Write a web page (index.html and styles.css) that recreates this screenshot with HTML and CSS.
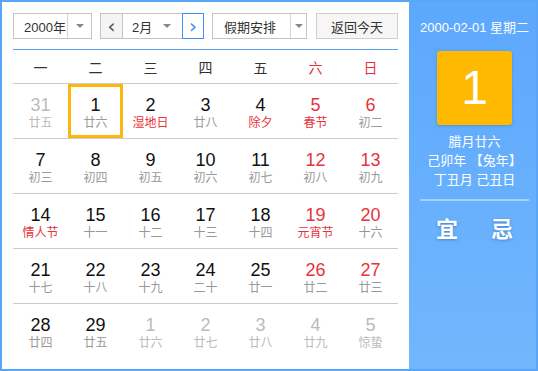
FILE: index.html
```html
<!DOCTYPE html>
<html lang="zh-CN">
<head>
    <meta charset="UTF-8">
    <title>万年历</title>
    <link rel="stylesheet" href="styles.css">
</head>
<body>

<div class="calendar">
    <div class="main">
        <div class="toolbar">
            <div class="select year-select">
                <span class="select-text">2000年</span>
                <span class="select-arrow"></span>
            </div>
            <div class="month-group">
                <button class="nav-btn">&lsaquo;</button>
                <div class="select month-select">
                    <span class="select-text">2月</span>
                    <span class="select-arrow plain"></span>
                </div>
                <button class="nav-btn active">&rsaquo;</button>
            </div>
            <div class="select holiday-select">
                <span class="select-text">假期安排</span>
                <span class="select-arrow"></span>
            </div>
            <button class="today-btn">返回今天</button>
        </div>

        <div class="weekdays">
            <div>一</div><div>二</div><div>三</div><div>四</div><div>五</div>
            <div class="weekend">六</div><div class="weekend">日</div>
        </div>

        <div class="days" id="days"></div>
    </div>

    <div class="panel">
        <div class="panel-date">2000-02-01 星期二</div>
        <div class="panel-day">1</div>
        <div class="panel-lunar">
            <div>腊月廿六</div>
            <div>己卯年 【兔年】</div>
            <div>丁丑月 己丑日</div>
        </div>
        <div class="panel-line"></div>
        <div class="panel-yiji">
            <span>宜</span>
            <span>忌</span>
        </div>
    </div>
</div>

<script>
    // [day, lunar, flags] flags: o = other month, r = red number, f = festival text, s = selected
    const days = [
        [31, '廿五', 'o'], [1, '廿六', 's'], [2, '湿地日', 'f'], [3, '廿八', ''], [4, '除夕', 'f'], [5, '春节', 'rf'], [6, '初二', 'r'],
        [7, '初三', ''], [8, '初四', ''], [9, '初五', ''], [10, '初六', ''], [11, '初七', ''], [12, '初八', 'r'], [13, '初九', 'r'],
        [14, '情人节', 'f'], [15, '十一', ''], [16, '十二', ''], [17, '十三', ''], [18, '十四', ''], [19, '元宵节', 'rf'], [20, '十六', 'r'],
        [21, '十七', ''], [22, '十八', ''], [23, '十九', ''], [24, '二十', ''], [25, '廿一', ''], [26, '廿二', 'r'], [27, '廿三', 'r'],
        [28, '廿四', ''], [29, '廿五', ''], [1, '廿六', 'o'], [2, '廿七', 'o'], [3, '廿八', 'o'], [4, '廿九', 'o'], [5, '惊蛰', 'o']
    ];

    const daysDiv = document.getElementById('days');
    days.forEach(([num, lunar, flags]) => {
        const cell = document.createElement('div');
        cell.className = 'day';
        if (flags.includes('o')) cell.classList.add('other');
        if (flags.includes('r')) cell.classList.add('red');
        if (flags.includes('f')) cell.classList.add('festival');
        if (flags.includes('s')) cell.classList.add('selected');
        cell.innerHTML = '<span class="num">' + num + '</span><span class="lunar">' + lunar + '</span>';
        daysDiv.appendChild(cell);
    });
</script>

</body>
</html>
```

FILE: styles.css
```css
body {
    margin: 0;
    font-family: 'Liberation Sans', 'Noto Sans CJK SC', sans-serif;
    background: #fff;
}
.calendar {
    box-sizing: border-box;
    width: 538px;
    height: 371px;
    border: 2px solid #5aa5f5;
    display: flex;
}
.main {
    width: 385px;
    padding: 11px 11px 0 11px;
    background: #fff;
}
.toolbar {
    display: flex;
    height: 26px;
    margin-bottom: 10px;
}
.select {
    box-sizing: border-box;
    height: 26px;
    border: 1px solid #c4c4c4;
    background: #fff;
    display: flex;
    align-items: stretch;
    font-size: 13px;
    color: #333;
}
.select-text {
    flex: 1;
    display: flex;
    align-items: center;
    padding-left: 10px;
}
.select-arrow {
    width: 23px;
    border-left: 1px solid #d6d6d6;
    position: relative;
}
.select-arrow.plain {
    border-left: none;
}
.select-arrow::after {
    content: '';
    position: absolute;
    left: 8px;
    top: 10px;
    border-left: 4px solid transparent;
    border-right: 4px solid transparent;
    border-top: 4px solid #888;
}
.year-select {
    width: 79px;
}
.month-group {
    display: flex;
    margin-left: 8px;
}
.month-select {
    width: 59px;
    border-left: none;
    border-right: none;
}
.month-select .select-text {
    padding-left: 9px;
}
.month-select .select-arrow::after {
    left: 4px;
}
.nav-btn {
    box-sizing: border-box;
    width: 23px;
    height: 26px;
    padding: 0;
    border: 1px solid #c4c4c4;
    background: #f4f4f4;
    color: #555;
    font-family: 'DejaVu Sans', sans-serif;
    font-size: 20px;
    line-height: 20px;
}
.nav-btn.active {
    width: 22px;
    border-color: #3c92f2;
    background: #fff;
    color: #3c92f2;
}
.holiday-select {
    width: 95px;
    margin-left: 8px;
}
.holiday-select .select-text {
    padding-left: 11px;
}
.holiday-select .select-arrow {
    width: 15px;
}
.holiday-select .select-arrow::after {
    left: 4px;
}
.today-btn {
    box-sizing: border-box;
    width: 82px;
    height: 26px;
    margin-left: 9px;
    border: 1px solid #cfcfcf;
    background: #f6f6f6;
    color: #333;
    font-family: 'Liberation Sans', 'Noto Sans CJK SC', sans-serif;
    font-size: 13px;
    padding: 0;
}
.weekdays {
    display: grid;
    grid-template-columns: repeat(7, 55px);
    border-top: 1px solid #5aa0ec;
    border-bottom: 1px solid #cccccc;
    height: 33px;
    align-items: center;
    text-align: center;
    font-size: 14px;
    color: #333;
}
.weekdays .weekend {
    color: #e8323c;
}
.days {
    display: grid;
    grid-template-columns: repeat(7, 55px);
    grid-auto-rows: 55px;
}
.day {
    box-sizing: border-box;
    border-bottom: 1px solid #cccccc;
    display: flex;
    flex-direction: column;
    align-items: center;
    padding-top: 11px;
}
.day:nth-last-child(-n+7) {
    border-bottom: none;
}
.day.selected {
    box-shadow: inset 0 0 0 3px #fbb70f;
}
.num {
    font-size: 18px;
    line-height: 20px;
    color: #111;
}
.lunar {
    font-size: 12px;
    line-height: 16px;
    color: #999;
}
.day.red .num {
    color: #e8323c;
}
.day.festival .lunar {
    color: #e8323c;
}
.day.other .num,
.day.other .lunar {
    color: #bbbbbb;
}
.panel {
    flex: 1;
    background: linear-gradient(180deg, #5ca8fd, #72b7fd);
    color: #fff;
    display: flex;
    flex-direction: column;
    align-items: center;
    padding-left: 4px;
}
.panel-date {
    font-size: 13px;
    margin-top: 17px;
    line-height: 18px;
}
.panel-day {
    width: 75px;
    height: 74px;
    margin-top: 14px;
    background: #ffb901;
    border-radius: 3px;
    box-shadow: 0 1px 3px rgba(0, 60, 140, 0.25);
    font-size: 48px;
    line-height: 74px;
    text-align: center;
}
.panel-lunar {
    margin-top: 7px;
    font-size: 13px;
    line-height: 19px;
    text-align: center;
}
.panel-line {
    width: 109px;
    height: 2px;
    margin-top: 10px;
    background: rgba(255, 255, 255, 0.4);
}
.panel-yiji {
    display: flex;
    gap: 33px;
    margin-top: 16px;
    font-size: 22px;
    font-weight: bold;
    line-height: 26px;
    text-shadow: 0 1px 3px rgba(0, 50, 120, 0.35);
}
```
